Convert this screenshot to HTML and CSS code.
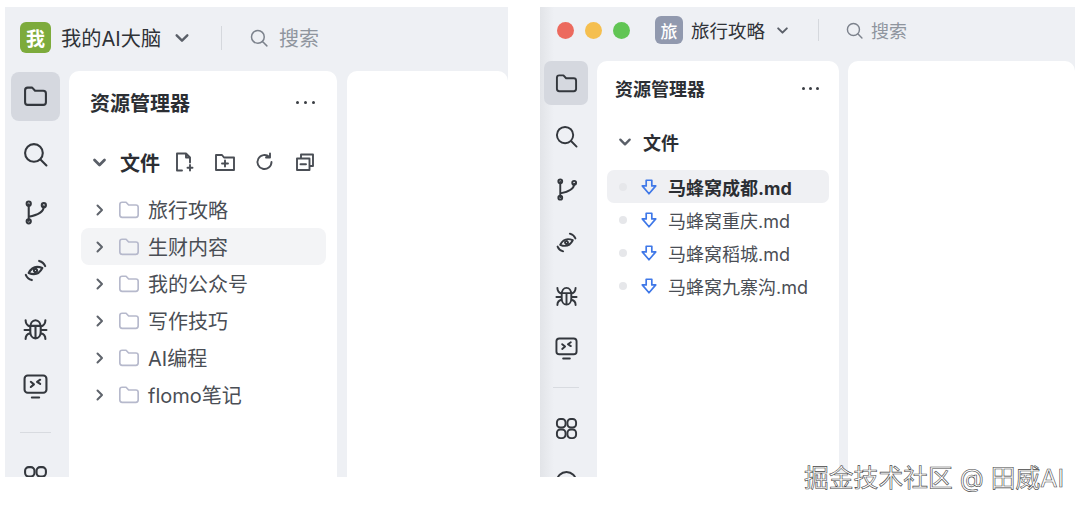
FILE: index.html
```html
<!DOCTYPE html>
<html lang="zh-CN">

<head>
    <meta charset="UTF-8" />
    <title>资源管理器</title>
    <link rel="stylesheet" href="styles.css">
</head>

<body>

    <svg class="defs" width="0" height="0">
        <symbol id="i-folder" viewBox="0 0 24 24"><path d="M2 6a2.500 2.500 0 0 1 2.500-2.500h4.300l2.800 3h7.900a2.500 2.500 0 0 1 2.500 2.500v8.500a2.500 2.500 0 0 1-2.500 2.500h-15A2.500 2.500 0 0 1 2 17.500z"/></symbol>
        <symbol id="i-search" viewBox="0 0 24 24"><circle cx="10.500" cy="10.500" r="8.500"/><path d="M17 17l5.500 5.500"/></symbol>
        <symbol id="i-branch" viewBox="0 0 24 24"><circle cx="5.500" cy="3.500" r="2" class="fill"/><circle cx="5.500" cy="20.500" r="2" class="fill"/><circle cx="20" cy="5" r="2" class="fill"/><path d="M5.500 4v16M20 6c0 5-6 8.500-14.500 10"/></symbol>
        <symbol id="i-eye" viewBox="0 0 24 24"><g transform="rotate(-20 12 12)"><path d="M5 12Q12 5.500 19 12Q12 18.500 5 12z"/><circle cx="12" cy="12" r="1.500"/></g><path d="M15.500 2.800c2.700.7 4.800 2.500 5.800 5M2.700 16.200c1 2.500 3.100 4.300 5.800 5"/></symbol>
        <symbol id="i-bug" viewBox="0 0 24 24"><path d="M7 11c0-4 2-7 5-7s5 3 5 7v4c0 3.500-2 6.500-5 6.500S7 18.500 7 15zM12 9.500v12M7 9.500h10M2.500 4c0 3 2 5.500 4.500 6M21.500 4c0 3-2 5.500-4.500 6M1.500 13.500H7M22.500 13.500H17M2.500 22c0-3 2-5 4.500-5.500M21.500 22c0-3-2-5-4.500-5.500"/></symbol>
        <symbol id="i-remote" viewBox="0 0 24 24"><rect x="1.500" y="1.500" width="21" height="16.500" rx="3"/><path d="M7.500 7.500l3 2.500-3 2.500M16.500 5.500l-3 2 3 2M8.500 22.500h7"/></symbol>
        <symbol id="i-grid" viewBox="0 0 24 24"><rect x="2" y="2" width="9" height="9" rx="3.500"/><rect x="13" y="2" width="9" height="9" rx="3.500"/><rect x="2" y="13" width="9" height="9" rx="3.500"/><rect x="13" y="13" width="9" height="9" rx="3.500"/></symbol>
        <symbol id="i-chat" viewBox="0 0 24 24"><circle cx="12" cy="12" r="10"/><path d="M7.500 9.500h9M7.500 14h9"/></symbol>
        <symbol id="i-chev-d" viewBox="0 0 12 12"><path d="M2 4l4 4 4-4"/></symbol>
        <symbol id="i-chev-r" viewBox="0 0 12 12"><path d="M3.500 1.500L8 6l-4.500 4.500"/></symbol>
        <symbol id="i-newfile" viewBox="0 0 20 20"><path d="M7 18.500H2V1.500h9l4 4v5M11 1.500v4h4M15 13v5.500M12.500 15.800h5"/></symbol>
        <symbol id="i-newfolder" viewBox="0 0 20 20"><path d="M1 3h6l2 2.500h10V18H1zM10 8.500v6M7 11.500h6"/></symbol>
        <symbol id="i-refresh" viewBox="0 0 20 20"><path d="M16.500 10a7 7 0 1 1-2.200-5.100M15 1.500v4h-4"/></symbol>
        <symbol id="i-collapse" viewBox="0 0 20 20"><path d="M2 6.500h12.500V18H2zM6 6.500V2.500h12V14h-3.500M5.500 12.300h5.500"/></symbol>
        <symbol id="i-down" viewBox="0 0 16 16"><path d="M5.500 2h5v5h3.500L8 14 2 7h3.500z"/></symbol>
    </svg>

    <div class="page">

        <!-- 左边窗口 -->
        <section class="win win-a">
            <header class="topbar">
                <span class="badge badge-green">我</span>
                <span class="space-name">我的AI大脑</span>
                <svg class="ic chev"><use href="#i-chev-d"/></svg>
                <span class="bar-sep"></span>
                <svg class="ic search-ic"><use href="#i-search"/></svg>
                <span class="search-text">搜索</span>
            </header>
            <div class="body">
                <nav class="rail">
                    <span class="rail-btn active"><svg class="ic"><use href="#i-folder"/></svg></span>
                    <span class="rail-btn"><svg class="ic"><use href="#i-search"/></svg></span>
                    <span class="rail-btn"><svg class="ic"><use href="#i-branch"/></svg></span>
                    <span class="rail-btn"><svg class="ic"><use href="#i-eye"/></svg></span>
                    <span class="rail-btn"><svg class="ic"><use href="#i-bug"/></svg></span>
                    <span class="rail-btn"><svg class="ic"><use href="#i-remote"/></svg></span>
                    <span class="rail-sep"></span>
                    <span class="rail-btn"><svg class="ic"><use href="#i-grid"/></svg></span>
                </nav>
                <div class="panel">
                    <div class="panel-head">
                        <h2>资源管理器</h2>
                        <span class="dots"><i></i><i></i><i></i></span>
                    </div>
                    <div class="section-head">
                        <svg class="ic chev"><use href="#i-chev-d"/></svg>
                        <span class="section-name">文件</span>
                        <span class="tools">
                            <svg class="ic"><use href="#i-newfile"/></svg>
                            <svg class="ic"><use href="#i-newfolder"/></svg>
                            <svg class="ic"><use href="#i-refresh"/></svg>
                            <svg class="ic"><use href="#i-collapse"/></svg>
                        </span>
                    </div>
                    <ul class="tree">
                        <li><svg class="ic arrow"><use href="#i-chev-r"/></svg><svg class="ic folder"><use href="#i-folder"/></svg>旅行攻略</li>
                        <li class="hover"><svg class="ic arrow"><use href="#i-chev-r"/></svg><svg class="ic folder"><use href="#i-folder"/></svg>生财内容</li>
                        <li><svg class="ic arrow"><use href="#i-chev-r"/></svg><svg class="ic folder"><use href="#i-folder"/></svg>我的公众号</li>
                        <li><svg class="ic arrow"><use href="#i-chev-r"/></svg><svg class="ic folder"><use href="#i-folder"/></svg>写作技巧</li>
                        <li><svg class="ic arrow"><use href="#i-chev-r"/></svg><svg class="ic folder"><use href="#i-folder"/></svg>AI编程</li>
                        <li><svg class="ic arrow"><use href="#i-chev-r"/></svg><svg class="ic folder"><use href="#i-folder"/></svg>flomo笔记</li>
                    </ul>
                </div>
                <div class="editor"></div>
            </div>
        </section>

        <!-- 右边窗口 -->
        <section class="win win-b">
            <header class="topbar">
                <span class="traffic"><i class="red"></i><i class="yellow"></i><i class="green"></i></span>
                <span class="badge badge-gray">旅</span>
                <span class="space-name">旅行攻略</span>
                <svg class="ic chev"><use href="#i-chev-d"/></svg>
                <span class="bar-sep"></span>
                <svg class="ic search-ic"><use href="#i-search"/></svg>
                <span class="search-text">搜索</span>
            </header>
            <div class="body">
                <nav class="rail">
                    <span class="rail-btn active"><svg class="ic"><use href="#i-folder"/></svg></span>
                    <span class="rail-btn"><svg class="ic"><use href="#i-search"/></svg></span>
                    <span class="rail-btn"><svg class="ic"><use href="#i-branch"/></svg></span>
                    <span class="rail-btn"><svg class="ic"><use href="#i-eye"/></svg></span>
                    <span class="rail-btn"><svg class="ic"><use href="#i-bug"/></svg></span>
                    <span class="rail-btn"><svg class="ic"><use href="#i-remote"/></svg></span>
                    <span class="rail-sep"></span>
                    <span class="rail-btn"><svg class="ic"><use href="#i-grid"/></svg></span>
                    <span class="rail-btn"><svg class="ic"><use href="#i-chat"/></svg></span>
                </nav>
                <div class="panel">
                    <div class="panel-head">
                        <h2>资源管理器</h2>
                        <span class="dots"><i></i><i></i><i></i></span>
                    </div>
                    <div class="section-head">
                        <svg class="ic chev"><use href="#i-chev-d"/></svg>
                        <span class="section-name">文件</span>
                    </div>
                    <ul class="tree">
                        <li class="selected"><i class="status"></i><svg class="ic down"><use href="#i-down"/></svg>马蜂窝成都.md</li>
                        <li><i class="status"></i><svg class="ic down"><use href="#i-down"/></svg>马蜂窝重庆.md</li>
                        <li><i class="status"></i><svg class="ic down"><use href="#i-down"/></svg>马蜂窝稻城.md</li>
                        <li><i class="status"></i><svg class="ic down"><use href="#i-down"/></svg>马蜂窝九寨沟.md</li>
                    </ul>
                </div>
                <div class="editor"></div>
            </div>
        </section>

    </div>

    <div class="watermark">掘金技术社区 @ 田威AI</div>

</body>

</html>
```

FILE: styles.css
```css
* {
    box-sizing: border-box;
}

body {
    margin: 0;
    background: #fff;
    font-family: Inter, "Noto Sans CJK SC", sans-serif;
    color: #2f3237;
    height: 509px;
    overflow: hidden;
    position: relative;
}

.defs {
    position: absolute;
}

.page {
    display: flex;
    padding: 7px 0 0 5px;
}

.win {
    height: 470px;
    background: #eef0f4;
    display: flex;
    flex-direction: column;
    overflow: hidden;
}

.win-a {
    width: 503px;
}

.win-b {
    width: 535px;
    margin-left: 32px;
    background: linear-gradient(90deg, #e2e4e8 0, #eef0f4 14px);
}

.topbar {
    display: flex;
    align-items: center;
    flex: none;
}

.ic {
    fill: none;
    stroke: currentColor;
    stroke-width: 2;
    stroke-linecap: round;
    stroke-linejoin: round;
    flex: none;
}

.ic .fill {
    fill: currentColor;
}

.badge {
    display: flex;
    align-items: center;
    justify-content: center;
    color: #fff;
    font-weight: 700;
    flex: none;
}

.badge-green {
    background: #7dab3c;
}

.badge-gray {
    background: #9199ae;
}

.space-name {
    white-space: nowrap;
}

.chev {
    color: #5a5f68;
}

.bar-sep {
    width: 1px;
    background: #d5d8dd;
    flex: none;
}

.search-ic {
    color: #7c828c;
}

.search-text {
    color: #8f959e;
    white-space: nowrap;
}

.traffic {
    display: flex;
    gap: 11px;
}

.traffic i {
    width: 17px;
    height: 17px;
    border-radius: 50%;
}

.traffic .red {
    background: #ec6a5e;
}

.traffic .yellow {
    background: #f5bf4f;
}

.traffic .green {
    background: #61c554;
}

.body {
    flex: 1;
    display: flex;
    min-height: 0;
}

.rail {
    flex: none;
    display: flex;
    flex-direction: column;
    align-items: flex-start;
    color: #33373d;
}

.rail-btn {
    flex: none;
    display: flex;
    align-items: center;
    justify-content: center;
}

.rail-btn.active {
    background: #d5d8df;
}

.rail-sep {
    flex: none;
    height: 1px;
    background: #d8dbe0;
}

.panel {
    flex: none;
    background: #fff;
    border-radius: 10px 10px 0 0;
}

.panel-head {
    display: flex;
    align-items: center;
    justify-content: space-between;
}

.panel-head h2 {
    margin: 0;
    font-weight: 700;
    color: #2b2e33;
}

.dots {
    display: flex;
}

.dots i {
    border-radius: 50%;
    background: #3a3d43;
}

.section-head {
    display: flex;
    align-items: center;
}

.section-name {
    font-weight: 700;
    color: #2b2e33;
    white-space: nowrap;
    flex: none;
}

.tools {
    display: flex;
    align-items: center;
    color: #4a4e55;
}

.tree {
    list-style: none;
    margin: 0;
    padding: 0;
}

.tree li {
    display: flex;
    align-items: center;
    color: #4a4e55;
    white-space: nowrap;
}

.arrow {
    color: #5f646c;
}

.folder {
    color: #b6b9cc;
    stroke-width: 1.800;
}

.status {
    border-radius: 50%;
    background: #e6e7ea;
    flex: none;
}

.down {
    color: #3f78e8;
    stroke-width: 1.500;
}

.editor {
    flex: 1;
    background: #fff;
    border-radius: 10px 10px 0 0;
}

/* 左窗口尺寸 */
.win-a .topbar {
    height: 61px;
    margin-bottom: 3px;
    padding-left: 15px;
}

.win-a .badge {
    width: 31px;
    height: 31px;
    border-radius: 6px;
    font-size: 19px;
}

.win-a .space-name {
    font-size: 20.200px;
    margin-left: 10px;
}

.win-a .topbar .chev {
    width: 16px;
    height: 16px;
    margin-left: 13px;
    stroke-width: 1.800;
}

.win-a .bar-sep {
    height: 24px;
    margin-left: 31px;
}

.win-a .search-ic {
    width: 18px;
    height: 18px;
    margin-left: 28px;
}

.win-a .search-text {
    font-size: 20px;
    margin-left: 11px;
}

.win-a .rail {
    width: 64px;
    padding: 1px 0 0 6px;
}

.win-a .rail-btn {
    width: 49px;
    height: 49px;
    margin-bottom: 9px;
    border-radius: 8px;
}

.win-a .rail-btn .ic {
    width: 25px;
    height: 25px;
}

.win-a .rail-sep {
    width: 31px;
    margin: 12px 0 20px 9px;
}

.win-a .panel {
    width: 268px;
    padding: 0 22px 0 12px;
}

.win-a .panel-head {
    height: 62px;
    padding: 0 0 0 9px;
}

.win-a .panel-head h2 {
    font-size: 20px;
}

.win-a .dots {
    gap: 5px;
}

.win-a .dots i {
    width: 3px;
    height: 3px;
}

.win-a .section-head {
    height: 54px;
    margin-top: 2px;
    padding-left: 11px;
}

.win-a .section-head .chev {
    width: 15px;
    height: 15px;
    stroke-width: 2.200;
}

.win-a .section-name {
    font-size: 20px;
    margin-left: 13px;
}

.win-a .tools {
    margin-left: 15px;
    gap: 20px;
}

.win-a .tools .ic {
    width: 20px;
    height: 20px;
    stroke-width: 1.900;
}

.win-a .tree {
    width: 245px;
    margin-top: 2px;
}

.win-a .tree li {
    height: 37px;
    font-size: 20px;
    padding-left: 13px;
    border-radius: 8px;
}

.win-a .tree li.hover {
    background: #f3f4f6;
}

.win-a .arrow {
    width: 12px;
    height: 12px;
}

.win-a .folder {
    width: 22px;
    height: 22px;
    margin: 0 8px 0 12px;
}

.win-a .editor {
    margin-left: 10px;
}

/* 右窗口尺寸 */
.win-b .topbar {
    height: 46px;
    margin-bottom: 8px;
    padding-left: 17px;
}

.win-b .traffic {
    margin-right: 25px;
}

.win-b .badge {
    width: 28px;
    height: 28px;
    border-radius: 6px;
    font-size: 17px;
    font-weight: 500;
}

.win-b .space-name {
    font-size: 18.500px;
    margin-left: 8px;
}

.win-b .topbar .chev {
    width: 13px;
    height: 13px;
    margin-left: 11px;
    stroke-width: 1.800;
}

.win-b .bar-sep {
    height: 22px;
    margin-left: 29px;
}

.win-b .search-ic {
    width: 17px;
    height: 17px;
    margin-left: 27px;
}

.win-b .search-text {
    font-size: 18px;
    margin-left: 8px;
}

.win-b .rail {
    width: 57px;
    padding-left: 4px;
}

.win-b .rail-btn {
    width: 44px;
    height: 44px;
    margin-bottom: 9px;
    border-radius: 7px;
}

.win-b .rail-btn .ic {
    width: 23px;
    height: 23px;
}

.win-b .rail-sep {
    width: 26px;
    margin: 8px 0 18px 9px;
}

.win-b .panel {
    width: 242px;
    padding: 0 10px;
}

.win-b .panel-head {
    height: 54px;
    padding: 0 10px 0 8px;
}

.win-b .panel-head h2 {
    font-size: 18px;
}

.win-b .dots {
    gap: 4px;
}

.win-b .dots i {
    width: 3px;
    height: 3px;
}

.win-b .section-head {
    height: 52px;
    margin-top: 1px;
    padding-left: 11px;
}

.win-b .section-head .chev {
    width: 14px;
    height: 14px;
}

.win-b .section-name {
    font-size: 18px;
    margin-left: 11px;
}

.win-b .tree {
    margin-top: 2px;
}

.win-b .tree li {
    height: 33px;
    font-size: 18px;
    padding-left: 12px;
    border-radius: 7px;
}

.win-b .tree li.selected {
    background: #eff0f3;
    font-weight: 700;
    color: #2b2e33;
}

.win-b .status {
    width: 8px;
    height: 8px;
}

.win-b .down {
    width: 18px;
    height: 18px;
    margin: 0 10px 0 13px;
}

.win-b .editor {
    margin-left: 9px;
}

.watermark {
    position: absolute;
    left: 804px;
    top: 463px;
    font-size: 24.800px;
    line-height: 30px;
    color: #fff;
    white-space: nowrap;
    -webkit-text-stroke: 0.600px #444;
}
```
